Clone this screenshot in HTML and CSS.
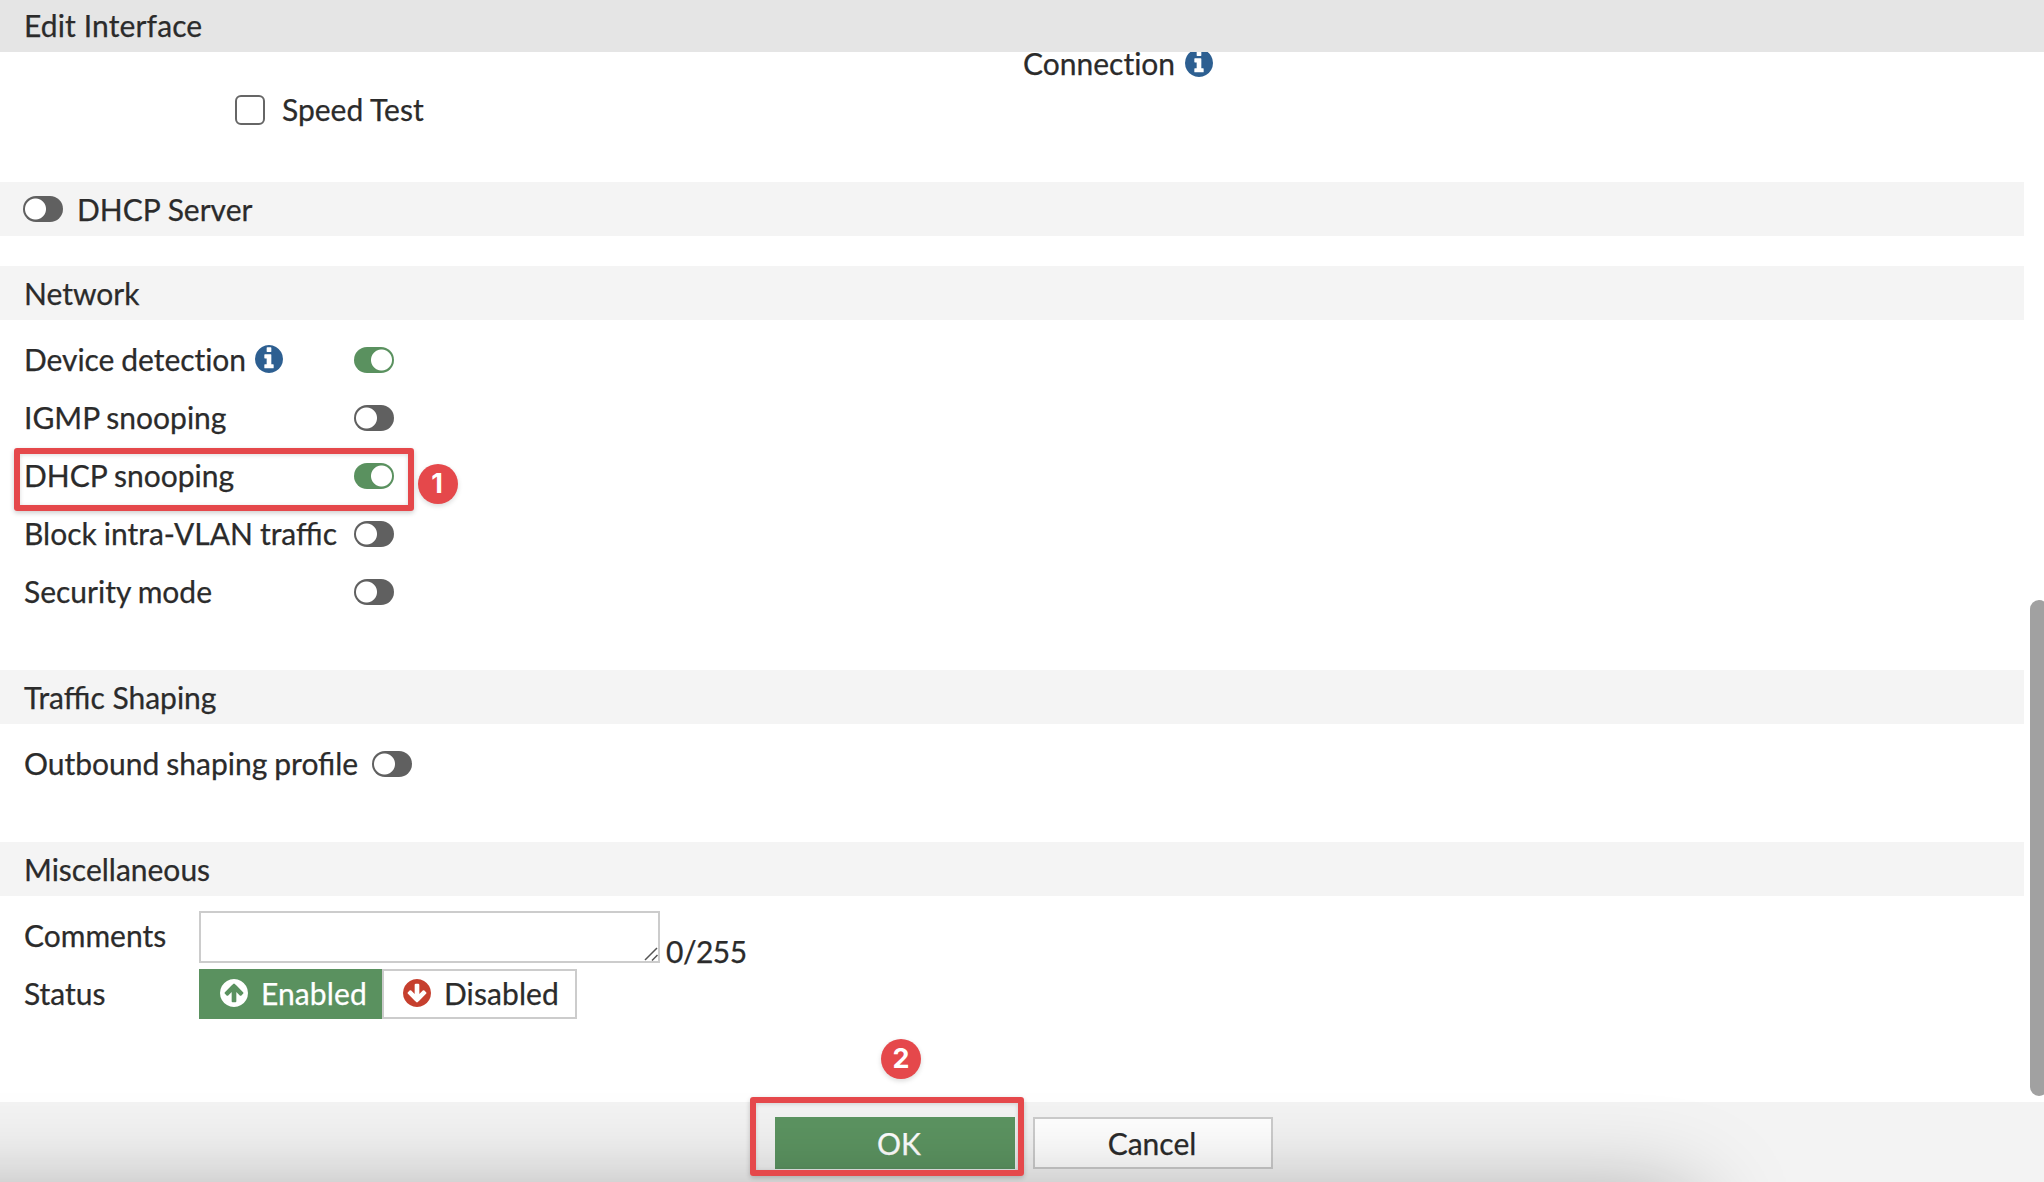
FILE: index.html
```html
<!DOCTYPE html>
<html lang="en">
<head>
<meta charset="utf-8">
<title>Edit Interface</title>
<link rel="stylesheet" href="styles.css">
</head>
<body>
<svg class="sprite" aria-hidden="true">
  <symbol id="info" viewBox="0 0 1536 1536"><path d="M1024 1248v-160q0-14-9-23t-23-9h-96v-512q0-14-9-23t-23-9h-320q-14 0-23 9t-9 23v160q0 14 9 23t23 9h96v320h-96q-14 0-23 9t-9 23v160q0 14 9 23t23 9h448q14 0 23-9t9-23zm-128-896v-192q0-14-9-23t-23-9h-192q-14 0-23 9t-9 23v192q0 14 9 23t23 9h192q14 0 23-9t9-23zm640 416q0 209-103 385.5t-279.5 279.5-385.5 103-385.5-103-279.5-279.5-103-385.5 103-385.5 279.5-279.5 385.5-103 385.5 103 279.5 279.5 103 385.5z"/></symbol>
  <symbol id="arrow-up" viewBox="0 0 1536 1536"><path d="M1284 767q0-27-18-45l-362-362-91-91q-18-18-45-18t-45 18l-91 91-362 362q-18 18-18 45t18 45l91 91q18 18 45 18t45-18l189-189v502q0 26 19 45t45 19h128q26 0 45-19t19-45v-502l189 189q19 19 45 19t45-19l91-91q18-18 18-45zm252 1q0 209-103 385.5t-279.5 279.5-385.5 103-385.5-103-279.5-279.5-103-385.5 103-385.5 279.5-279.5 385.5-103 385.5 103 279.5 279.5 103 385.5z"/></symbol>
</svg>
<header class="title">Edit Interface</header>
<main class="content">
  <section class="access">
    <label class="check"><span class="box"></span><span class="check-text">Speed Test</span></label>
    <div class="connection">Connection<svg class="icon info"><use href="#info"/></svg></div>
  </section>
  <h2 class="band dhcp"><span class="toggle"></span>DHCP Server</h2>
  <h2 class="band network">Network</h2>
  <div class="rows">
    <div class="row"><span class="label plain">Device detection<svg class="icon info"><use href="#info"/></svg></span><span class="toggle on"></span></div>
    <div class="row"><span class="label">IGMP snooping</span><span class="toggle"></span></div>
    <div class="row"><span class="label">DHCP snooping</span><span class="toggle on"></span></div>
    <div class="row"><span class="label">Block intra-VLAN traffic</span><span class="toggle"></span></div>
    <div class="row"><span class="label">Security mode</span><span class="toggle"></span></div>
  </div>
  <h2 class="band shaping">Traffic Shaping</h2>
  <div class="rows">
    <div class="row"><span class="label wide">Outbound shaping profile</span><span class="toggle"></span></div>
  </div>
  <h2 class="band misc">Miscellaneous</h2>
  <div class="rows">
    <div class="row field">
      <span class="label short">Comments</span>
      <span class="comment"><svg class="grip" viewBox="0 0 14 14"><path d="M1 13 13 1M8 13.5l5.5-5.5"/></svg></span>
      <span class="count">0/255</span>
    </div>
    <div class="row">
      <span class="label short">Status</span>
      <div class="choices">
        <span class="choice enabled"><svg class="icon"><use href="#arrow-up"/></svg><span class="choice-text">Enabled</span></span>
        <span class="choice disabled"><svg class="icon down"><use href="#arrow-up"/></svg><span class="choice-text">Disabled</span></span>
      </div>
    </div>
  </div>
</main>
<footer class="footer">
  <button class="button ok">OK</button>
  <button class="button cancel">Cancel</button>
</footer>
<div class="shade"></div>
<div class="thumb"></div>
<div class="mark mark-dhcp"></div>
<div class="badge badge-one">1</div>
<div class="mark mark-ok"></div>
<div class="badge badge-two">2</div>
</body>
</html>
```
FILE: styles.css
```css
* { box-sizing: border-box; }
html { overflow: hidden; }
body {
  margin: 0;
  height: 1182px;
  position: relative;
  overflow: hidden;
  display: flex;
  flex-direction: column;
  background: #fff;
  color: #2b2b2b;
  font: 30px/36px Lato, sans-serif;
  -webkit-text-stroke: .25px currentColor;
}
.sprite { display: none; }
.title {
  height: 52px;
  flex: none;
  padding: 7px 24px;
  background: #e5e5e5;
  letter-spacing: .13px;
}
.content {
  flex: 1;
  min-height: 0;
  overflow: hidden;
  padding-right: 20px;
}
.icon { width: 28px; height: 28px; flex: none; fill: currentColor; stroke: none; }
.info { color: #2d5f91; margin-left: 9.5px; }
.down { color: #c63f2e; transform: rotate(180deg); }

.access {
  display: grid;
  grid-template-columns: 788px auto;
  height: 137px;
  margin-top: -7px;
  padding-left: 235px;
}
.check { display: flex; align-items: center; height: 40px; margin-top: 45px; gap: 17px; }
.check-text { padding-bottom: 2px; }
.box { width: 30px; height: 30px; border: 2px solid #666; border-radius: 6px; }
.connection { display: flex; height: 36px; align-items: center; font-variant-ligatures: none; }

.band {
  display: flex;
  align-items: center;
  height: 54px;
  margin: 0;
  padding-left: 24px;
  background: #f4f4f4;
  font: inherit;
}
.dhcp { padding-left: 23px; gap: 14px; }
.network { margin-top: 30px; }
.shaping { margin-top: 50px; }
.misc { margin-top: 50px; }

.rows { padding: 10px 0 0 24px; }
.row { display: flex; align-items: center; height: 58px; }
.label { width: 330px; display: flex; align-items: center; white-space: nowrap; word-spacing: -.7px; }
.wide { width: 348px; }
.short { width: 175px; }
.plain { font-variant-ligatures: none; letter-spacing: -.05px; }

.toggle {
  width: 40px;
  height: 26px;
  flex: none;
  border-radius: 13px;
  background: radial-gradient(circle at 12.5px 13px, #fff 10px, #606060 11px);
}
.toggle.on { background: radial-gradient(circle at 27.5px 13px, #fff 10px, #5a915f 11px); }
.row .toggle { margin-top: 2px; }

.comment {
  width: 461px;
  height: 52px;
  margin-top: 4px;
  border: 2px solid #ccc;
  display: flex;
  align-items: flex-end;
  justify-content: flex-end;
}
.grip { width: 14px; height: 14px; fill: none; stroke: #555; stroke-width: 1.5; }
.count { padding: 31px 0 0 6px; letter-spacing: -.5px; }
.choices { display: flex; margin-top: 2px; }
.choice {
  display: flex;
  align-items: center;
  height: 50px;
  border: 2px solid #ccc;
  gap: 13px;
}
.choice .icon { margin-bottom: 2px; }
.choice-text { padding-bottom: 2px; letter-spacing: .1px; }
.enabled { width: 183px; padding-left: 19px; color: #fff; background: #5a915f; border-color: #5a915f; }
.disabled { width: 195px; padding-left: 19px; }

.footer {
  height: 80px;
  flex: none;
  display: flex;
  gap: 18px;
  padding: 15px 0 0 775px;
  background: #f3f3f3;
}
.button {
  width: 240px;
  height: 52px;
  padding: 0;
  border: 2px solid #ccc;
  background: #fff;
  color: #2b2b2b;
  font: inherit;
}
.ok { padding-left: 8px; background: #5c9461; border-color: #5c9461; color: #fff; }
.cancel { padding-right: 2px; }

/* Shadow cast by the window below the page */
.shade {
  position: absolute;
  left: -150px;
  top: 1197px;
  width: 1845px;
  height: 300px;
  border-radius: 20px;
  box-shadow: 0 0 95px rgba(0, 0, 0, .34);
}
.thumb {
  position: absolute;
  left: 2030px;
  top: 600px;
  width: 18px;
  height: 496px;
  border-radius: 9px;
  background: #a1a1a1;
}
.mark {
  position: absolute;
  border: 6px solid #e5484b;
  border-radius: 3px;
  box-shadow: 0 2px 5px rgba(0, 0, 0, .2), inset 0 1px 4px rgba(0, 0, 0, .15);
}
.mark-dhcp { left: 14px; top: 448px; width: 400px; height: 63px; }
.mark-ok { left: 750px; top: 1097px; width: 274px; height: 79px; }
.badge {
  position: absolute;
  width: 40px;
  height: 40px;
  border-radius: 50%;
  background: #e5484b;
  color: #fff;
  font: 700 27px/40px Inter, sans-serif;
  text-align: center;
  box-shadow: 0 2px 5px rgba(0, 0, 0, .15);
  -webkit-text-stroke: 0;
}
.badge-one { left: 418px; top: 463.5px; padding-right: 2px; }
.badge-two { left: 881px; top: 1039px; }
```
